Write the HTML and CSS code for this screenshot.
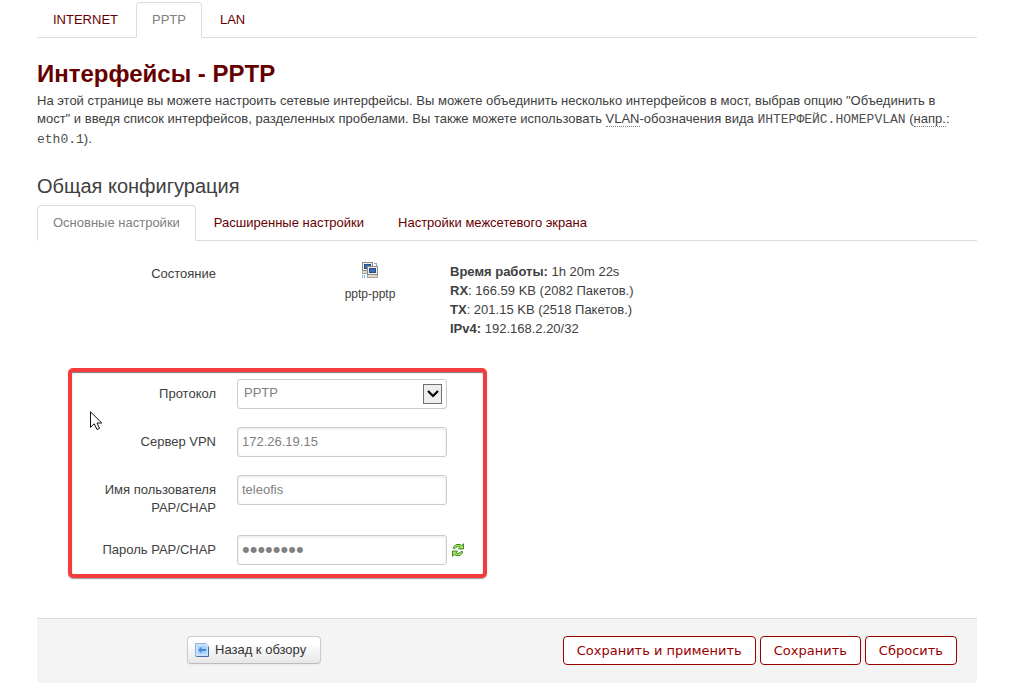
FILE: index.html
```html
<!DOCTYPE html>
<html lang="ru">
<head>
<meta charset="utf-8">
<title>Интерфейсы - PPTP</title>
<link rel="stylesheet" href="styles.css">
</head>
<body>
<main class="page">
  <nav class="tabs">
    <a class="tab" href="#internet">INTERNET</a>
    <a class="tab active" href="#pptp">PPTP</a>
    <a class="tab" href="#lan">LAN</a>
  </nav>

  <h1 class="title">Интерфейсы - PPTP</h1>
  <p class="intro">На этой странице вы можете настроить сетевые интерфейсы. Вы можете объединить несколько интерфейсов в мост, выбрав опцию "Объединить в мост" и введя список интерфейсов, разделенных пробелами. Вы также можете использовать <abbr>VLAN</abbr>-обозначения вида <code>ИНТЕРФЕЙС.HOMEРVLAN</code> (<abbr>напр.</abbr>: <code>eth0.1</code>).</p>

  <h2 class="subtitle">Общая конфигурация</h2>
  <nav class="tabs">
    <a class="tab active" href="#general">Основные настройки</a>
    <a class="tab" href="#advanced">Расширенные настройки</a>
    <a class="tab" href="#firewall">Настройки межсетевого экрана</a>
  </nav>

  <form class="form">
    <section class="status">
      <span class="status-label">Состояние</span>
      <div class="device">
        <svg class="device-icon" viewBox="0 0 16 16" shape-rendering="crispEdges" aria-hidden="true">
          <path fill="#82aee6" d="M12 1h3v3h-1V2h-2zM0 13h1v3H0zM2 13h1v3H2z"/>
          <path fill="#8c8c86" d="M0 0h11v9H0z"/>
          <path fill="#f2f0e8" d="M1 1h9v7H1z"/>
          <path fill="#244c8d" d="M2 2h7v5H2z"/>
          <path fill="#3f6db5" d="M3 3h5v3H3z"/>
          <path fill="#a5a59e" d="M0 9h6v3H0z"/>
          <path fill="#dedbd0" d="M1 9h4v2H1z"/>
          <path fill="#8c8c86" d="M5 4h11v9H5z"/>
          <path fill="#f2f0e8" d="M6 5h9v7H6z"/>
          <path fill="#244c8d" d="M7 6h7v5H7z"/>
          <path fill="#3f6db5" d="M8 7h5v3H8z"/>
          <path fill="#a5a59e" d="M5 13h11v3H5z"/>
          <path fill="#dedbd0" d="M6 13h9v2H6z"/>
        </svg>
        <span class="device-name">pptp-pptp</span>
      </div>
      <div class="stats">
        <div><b>Время работы:</b> 1h 20m 22s</div>
        <div><b>RX</b>: 166.59 KB (2082 Пакетов.)</div>
        <div><b>TX</b>: 201.15 KB (2518 Пакетов.)</div>
        <div><b>IPv4:</b> 192.168.2.20/32</div>
      </div>
    </section>

    <section class="frame">
      <div class="row">
        <label class="row-label" for="proto">Протокол</label>
        <span class="select-box">
          <select class="field" id="proto"><option>PPTP</option></select>
          <span class="select-arrow"><svg viewBox="0 0 12 8" aria-hidden="true"><path d="M1 1L6 6L11 1" fill="none" stroke="#000" stroke-width="2.2"/></svg></span>
        </span>
      </div>
      <div class="row">
        <label class="row-label" for="server">Сервер VPN</label>
        <input class="field" id="server" type="text" value="172.26.19.15">
      </div>
      <div class="row">
        <label class="row-label" for="user">Имя пользователя PAP/CHAP</label>
        <input class="field" id="user" type="text" value="teleofis">
      </div>
      <div class="row">
        <label class="row-label" for="pass">Пароль PAP/CHAP</label>
        <input class="field secret" id="pass" type="password" value="password">
        <button class="reveal" type="button" aria-label="Показать пароль">
          <svg viewBox="0 0 12 14" aria-hidden="true">
            <path d="M1.5 5.5V4L4 1.5H8L9.5 2.5L11.5 .8V6H6.5L8 4.2L6.5 3.5L4 4.2L3 5.5Z" fill="#a5e25f" stroke="#3f8c25"/>
            <path d="M10.500 8.500V10L8 12.500H4L2.500 11.500L.5 13.200V8H5.500L4 9.800L5.500 10.500L8 9.800L9 8.500Z" fill="#a5e25f" stroke="#3f8c25"/>
          </svg>
        </button>
      </div>
      <svg class="pointer" viewBox="0 0 13 20" aria-hidden="true"><path d="M.5 .8V16.300L4.200 12.800L7 18.500L9.500 17.300L7 12H11.800Z" fill="#fff" stroke="#111122"/></svg>
    </section>

    <footer class="actions">
      <button class="back" type="button">
        <svg viewBox="0 0 16 16" aria-hidden="true">
          <path d="M1.500 1.500H12.500L14.500 3.500V14.500H1.500Z" fill="#cbe1fa" stroke="#8fb5e0"/>
          <path d="M12 1H15V4Z" fill="#fff"/>
          <path d="M14.500 5V14.500H3" fill="none" stroke="#456b9f"/>
          <path d="M4 4H13V12H4Z" fill="#a6d2ff"/>
          <path d="M4 8L7.500 4.800V7H12V9H7.500V11.200Z" fill="#4788d8"/>
        </svg>
        <span>Назад к обзору</span>
      </button>
      <div class="submit-group">
        <button class="btn" type="submit">Сохранить и применить</button>
        <button class="btn" type="button">Сохранить</button>
        <button class="btn" type="reset">Сбросить</button>
      </div>
    </footer>
  </form>
</main>
</body>
</html>
```

FILE: styles.css
```css
* { box-sizing: border-box; }

body {
  margin: 0;
  background: #fff;
  color: #404040;
  font: 13px/18px "Liberation Sans", Arial, sans-serif;
}

.page { padding: 2px 42px 0 37px; }

.tabs {
  display: flex;
  gap: 2px;
  border-bottom: 1px solid #ddd;
}

.tab {
  margin-bottom: -1px;
  padding: 0 15px;
  border: 1px solid transparent;
  border-radius: 4px 4px 0 0;
  color: #600;
  line-height: 34px;
  text-decoration: none;
}

.tab.active {
  border-color: #ddd;
  border-bottom-color: #fff;
  background: #fff;
  color: #808080;
}

.title {
  margin: 18px 0 0;
  color: #600;
  font-size: 24px;
  line-height: 36px;
}

.intro {
  margin: 0;
  padding-right: 20px;
}

.intro abbr { border-bottom: 1px dotted #808080; }

.intro code {
  color: #505050;
  font: 13px/20px "Liberation Mono", "Courier New", monospace;
}

.subtitle {
  margin: 18px 0 1px;
  font-size: 20px;
  font-weight: 400;
  line-height: 36px;
}

.status {
  display: flex;
  align-items: flex-start;
  padding-top: 21px;
}

.status-label {
  width: 179px;
  padding-top: 3px;
  text-align: right;
}

.device {
  display: flex;
  flex-direction: column;
  align-items: center;
  gap: 7px;
  width: 160px;
  margin-left: 74px;
  font-size: 12px;
}

.device-icon { width: 16px; height: 16px; }

.stats { line-height: 19px; }

.frame {
  position: relative;
  display: flex;
  flex-direction: column;
  gap: 18px;
  width: 419px;
  margin: 30px 0 0 31px;
  padding: 7px 0 9px;
  border: 4px solid #f53b3b;
  border-radius: 5px;
  box-shadow: inset 0 1px 1px #777, 0 1px 1px #999;
}

.row {
  display: flex;
  align-items: flex-start;
}

.row-label {
  width: 144px;
  margin-right: 21px;
  padding: 6px 0 0 20px;
  text-align: right;
}

.field {
  width: 210px;
  height: 30px;
  padding: 0 4px 2px;
  border: 1px solid #ccc;
  border-radius: 3px;
  background: #fff;
  box-shadow: inset 0 1px 3px rgba(0, 0, 0, 0.1);
  color: #808080;
  font: inherit;
}

.field.secret {
  padding-bottom: 0;
  font-size: 22px;
}

.select-box { position: relative; display: flex; }

.select-box .field {
  padding-left: 6px;
  appearance: none;
  box-shadow: none;
}

.select-arrow {
  position: absolute;
  top: 5px;
  right: 5px;
  display: flex;
  align-items: center;
  justify-content: center;
  width: 19px;
  height: 20px;
  border: 1px solid #707070;
  background: #eee;
  pointer-events: none;
}

.select-arrow svg { width: 12px; height: 8px; }

.reveal {
  display: flex;
  align-self: center;
  margin-left: 5px;
  padding: 0;
  border: 0;
  background: none;
}

.reveal svg { width: 12px; height: 14px; }

.pointer {
  position: absolute;
  top: 39px;
  left: 18px;
  width: 13px;
  height: 20px;
}

.actions {
  display: flex;
  align-items: flex-start;
  justify-content: space-between;
  margin-top: 40px;
  padding: 17px 20px 18px 150px;
  border-top: 1px solid #ddd;
  border-radius: 0 0 3px 3px;
  background: #f4f4f4;
}

.back {
  display: flex;
  align-items: center;
  gap: 5px;
  height: 28px;
  padding: 0 14px 0 6px;
  border: 1px solid #ccc;
  border-bottom-color: #bbb;
  border-radius: 4px;
  background: linear-gradient(#fff 25%, #e6e6e6);
  box-shadow: 0 1px 2px rgba(0, 0, 0, 0.05);
  color: #333;
  font: inherit;
}

.back svg { width: 16px; height: 16px; }

.submit-group { display: flex; gap: 4px; }

.btn {
  height: 29px;
  padding: 0 13px;
  border: 1px solid #900;
  border-radius: 4px;
  background: #fff;
  color: #900;
  font: 13px/18px "DejaVu Sans", Verdana, sans-serif;
}
```
